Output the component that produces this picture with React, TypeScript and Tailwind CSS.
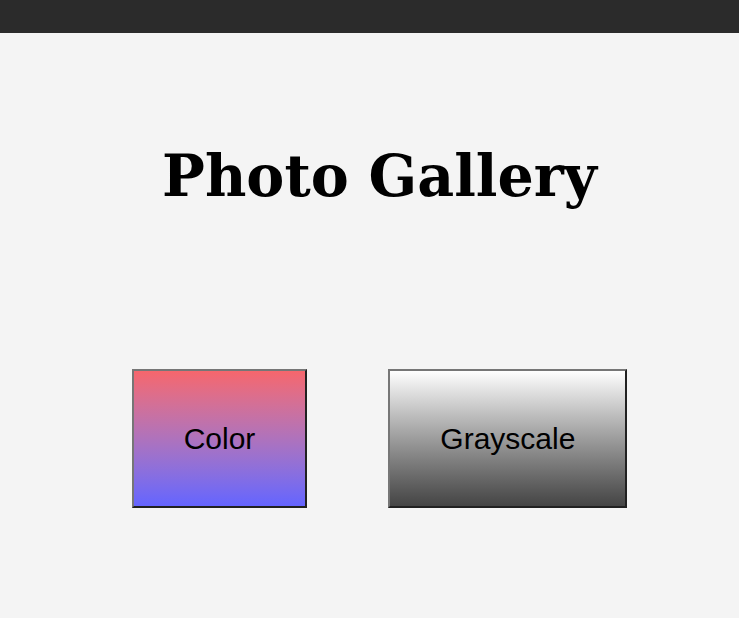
import React from "react";

export default function App() {
  const btn =
    "px-[50px] py-[50px] text-[30px] leading-[35px] text-black border-2 [border-style:outset] border-[#767676] font-['Liberation_Sans',Arial,sans-serif]";

  return (
    <div className="min-h-[618px] w-full bg-[#f4f4f4]">
      <div className="h-[33px] w-full bg-[#2b2b2b]" />
      <div className="pl-5">
        <h1 className="pt-[103px] text-center text-[57px] leading-[80px] font-bold text-black font-['Roboto_Slab','DejaVu_Serif',serif]">
          Photo Gallery
        </h1>
        <div className="mt-[153px] flex justify-center gap-[81px]">
          <button className={`${btn} bg-linear-to-b from-[#f6666c] to-[#6464ff]`}>
            Color
          </button>
          <button className={`${btn} bg-linear-to-b from-[#ffffff] to-[#454545]`}>
            Grayscale
          </button>
        </div>
      </div>
    </div>
  );
}
